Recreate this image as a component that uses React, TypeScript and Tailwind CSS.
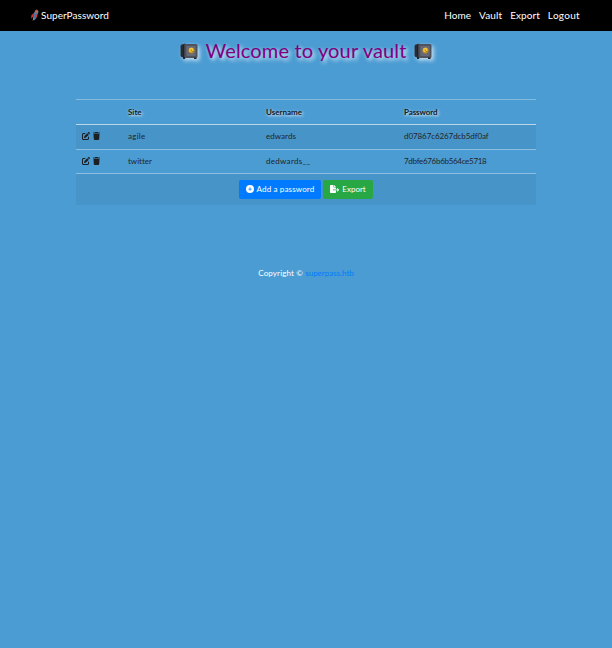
import React from "react";
import { FaPenToSquare, FaTrash, FaCirclePlus, FaFileExport } from "react-icons/fa6";

const rows = [
  { site: "agile", user: "edwards", password: "d07867c6267dcb5df0af", siteCls: "tracking-[0.25px]", userCls: "tracking-[0.05px]", passCls: "tracking-[-0.08px]" },
  { site: "twitter", user: "dedwards__", password: "7dbfe676b6b564ce5718", siteCls: "tracking-[0px]", userCls: "tracking-[0.3px]", passCls: "tracking-[-0.3px]" },
];

function Safe() {
  return (
    <svg viewBox="0 0 36 32" className="h-[16px] w-[18px] shrink-0 overflow-visible drop-shadow-[2px_2px_2px_rgba(255,255,255,0.7)]">
      <path d="M3 3 11 1v30l-8-3Q1 27 1 24V7q0-3 2-4Z" fill="#30333b" />
      <path d="M4 5v22M7 4v24" stroke="#191c22" strokeWidth="1.4" />
      <rect x="9" y="2" width="26" height="28" rx="3" fill="#50535d" />
      <rect x="12" y="5" width="20" height="22" rx="1.5" fill="#666a76" stroke="#464954" strokeWidth="1" />
      <path d="M6 28h4v4H6zM28 29h5v3h-5z" fill="#24262c" />
      <circle cx="23" cy="15" r="6" fill="#c18c1c" />
      <circle cx="22.5" cy="14" r="4.5" fill="#f3c73a" />
      <path d="m22 13 1 3 4 2" stroke="#805b17" strokeWidth="1.3" fill="none" />
    </svg>
  );
}

function Figure() {
  return (
    <svg viewBox="0 0 16 24" className="h-[12px] w-[8px] shrink-0">
      <path d="m9 2 3-1 2 3-2 5-3 2-3-3Z" fill="#b9604a" />
      <path d="m6 7 5 1 2 4-3 7-4 4-2-5Z" fill="#4d77a8" />
      <path d="m6 8-5 4-1 7 5-4ZM9 12l4-2-1 6-4 3Z" fill="#d0382f" />
      <path d="m5 17 2 3-4 4Z" fill="#d58b45" />
      <path d="m12 3 3 1-1 5-3 2Z" fill="#5c8eac" />
    </svg>
  );
}

export default function App() {
  return (
    <div className="flex h-[648px] w-full flex-col bg-[#4b9cd3] font-[Lato,sans-serif] text-[8px] text-[#212529] [font-variant-ligatures:none]">
      <nav className="flex h-[31px] shrink-0 items-start justify-between bg-black pr-8 pl-[31px] text-[10px] leading-[30px] text-white">
        <div className="flex items-center gap-[2px]">
          <Figure />
          <span className="tracking-[0.05px]">SuperPassword</span>
        </div>
        <div className="flex gap-2">
          <span>Home</span>
          <span className="tracking-[0.15px]">Vault</span>
          <span className="tracking-[0.05px]">Export</span>
          <span className="tracking-[0.3px]">Logout</span>
        </div>
      </nav>
      <h1 className="flex h-[40px] shrink-0 items-start justify-center gap-[7px] text-[20px] leading-[39px] text-[purple]">
        <span className="flex h-[39px] items-center"><Safe /></span>
        <span className="tracking-[0.15px] [text-shadow:2px_2px_4px_white]">Welcome to your vault</span>
        <span className="flex h-[39px] items-center"><Safe /></span>
      </h1>
      <table className="mx-auto mt-[28px] w-[460px] table-fixed border-collapse text-left">
        <colgroup>
          <col className="w-[46px]" />
          <col className="w-[138px]" />
          <col className="w-[138px]" />
          <col className="w-[138px]" />
        </colgroup>
        <thead>
          <tr className="h-[25px] border-t border-b border-t-[#86bbe0] border-b-[#bdd7e9] text-[#15191d] [text-shadow:1px_1px_3px_white]">
            <th />
            <th className="px-[6px] pt-0 pb-px font-bold">Site</th>
            <th className="px-[6px] pt-0 pb-px font-bold">Username</th>
            <th className="px-[6px] pt-0 pb-px font-bold"><span className="tracking-[-0.1px]">Password</span></th>
          </tr>
        </thead>
        <tbody>
          {rows.map((r) => (
            <tr key={r.site} className="h-[24.5px] border-b border-[#8dbfe2] odd:bg-[#4794c8]">
              <td className="px-[6px] pt-0 pb-px">
                <div className="flex items-center gap-[3px] text-[#1c2024]">
                  <FaPenToSquare className="size-[8px]" />
                  <FaTrash className="h-[8px] w-[7px]" />
                </div>
              </td>
              <td className="px-[6px] pt-0 pb-px"><span className={r.siteCls}>{r.site}</span></td>
              <td className="px-[6px] pt-0 pb-px"><span className={r.userCls}>{r.user}</span></td>
              <td className="px-[6px] pt-0 pb-px"><span className={r.passCls}>{r.password}</span></td>
            </tr>
          ))}
          <tr className="h-[31px] bg-[#4794c8]">
            <td colSpan={4} className="p-0">
              <div className="flex justify-center gap-[2px] text-white">
                <button className="flex h-[19px] w-[82px] items-center justify-center gap-[3px] rounded-[2px] bg-[#007bff]">
                  <FaCirclePlus className="size-[8px]" />
                  <span className="tracking-[0.15px]">Add a password</span>
                </button>
                <button className="flex h-[19px] w-[50px] items-center justify-center gap-[3px] rounded-[2px] bg-[#28a745]">
                  <FaFileExport className="h-[8px] w-[9px]" />
                  <span>Export</span>
                </button>
              </div>
            </td>
          </tr>
        </tbody>
      </table>
      <footer className="mt-[62px] text-center leading-3 text-white">
        <span className="tracking-[0.15px]">Copyright ©</span> <a className="text-[#007bff]">superpass.htb</a>
      </footer>
    </div>
  );
}
